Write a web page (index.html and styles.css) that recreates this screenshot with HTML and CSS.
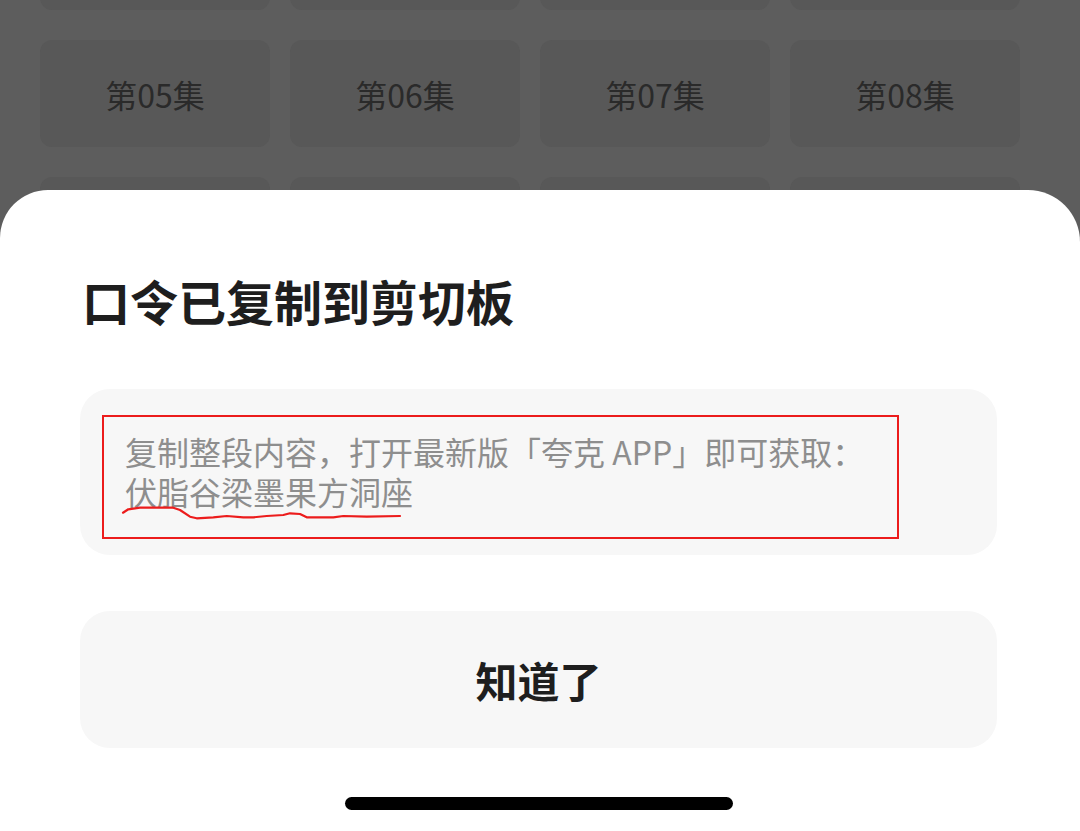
FILE: index.html
```html
<!DOCTYPE html>
<html lang="zh-CN">
<head>
    <meta charset="UTF-8">
    <meta name="viewport" content="width=device-width, initial-scale=1.0">
    <title>口令已复制到剪切板</title>
    <link rel="stylesheet" href="styles.css">
</head>
<body>

    <!-- Episode list behind the dimmed overlay (first row scrolled out of view) -->
    <div class="episode-grid">
        <div class="episode"></div>
        <div class="episode"></div>
        <div class="episode"></div>
        <div class="episode"></div>
        <div class="episode">第05集</div>
        <div class="episode">第06集</div>
        <div class="episode">第07集</div>
        <div class="episode">第08集</div>
        <div class="episode"></div>
        <div class="episode"></div>
        <div class="episode"></div>
        <div class="episode"></div>
    </div>

    <!-- Bottom sheet -->
    <div class="sheet">
        <h1 class="sheet-title">口令已复制到剪切板</h1>

        <div class="code-card">
            <div class="code-mark">
                <p class="code-text">复制整段内容，打开最新版「夸克 APP」即可获取：<br>伏脂谷梁墨果方洞座</p>
                <!-- hand-drawn underline -->
                <svg class="squiggle" width="320" height="120" viewBox="0 0 320 120">
                    <path d="M21 97.7 L26.3 94.3 L38 92.7 L71.3 92.7 L78 95 L88 101.7 L94.7 103.3 L111.3 102.3 L124.7 101 L141.3 102.3 L151.3 102.3 L164.7 101 L181.3 100 L188 98.3 L198 99 L204.7 102.3 L231.3 102.3 L241.3 101 L264.7 101.7 L298 101"
                          fill="none" stroke="#ec1c1c" stroke-width="2.2" stroke-linecap="round" stroke-linejoin="round"/>
                </svg>
            </div>
        </div>

        <button class="ok-btn">知道了</button>

        <div class="home-bar"></div>
    </div>

</body>
</html>
```

FILE: styles.css
```css
/* Reset */
* {
    box-sizing: border-box;
    margin: 0;
    padding: 0;
}

html, body {
    width: 1080px;
    height: 831px;
    overflow: hidden;
}

body {
    position: relative;
    background-color: #5d5d5d; /* dimmed page */
    font-family: "Noto Sans CJK SC", "Noto Sans", sans-serif;
}

/* Episode grid (behind the overlay) */
.episode-grid {
    display: grid;
    grid-template-columns: repeat(4, 230px);
    grid-auto-rows: 107px;
    column-gap: 20px;
    row-gap: 30px;
    padding: 0 40px;
    margin-top: -97px;
}

.episode {
    display: flex;
    justify-content: center;
    align-items: center;
    background-color: #585858;
    border-radius: 12px;
    color: #2a2a2a;
    font-size: 32px;
}

/* Bottom sheet */
.sheet {
    position: absolute;
    top: 190px;
    left: 0;
    right: 0;
    bottom: 0;
    display: flex;
    flex-direction: column;
    padding: 80px 83px 0 80px;
    background-color: #fff;
    border-radius: 48px 52px 0 0;
}

.sheet-title {
    padding-left: 2px;
    font-size: 48px;
    line-height: 60px;
    font-weight: 600;
    color: #1e1e1e;
}

/* Copied code card */
.code-card {
    margin-top: 59px;
    height: 166px;
    padding: 26px 0 0 22px;
    background-color: #f7f7f7;
    border-radius: 30px;
}

.code-mark {
    position: relative;
    width: 797px;
    height: 124px;
    padding: 14px 0 0 21px;
    border: 2px solid #ec1c1c;
}

.code-text {
    font-size: 32px;
    line-height: 40px;
    color: #8e8e8e;
}

.squiggle {
    position: absolute;
    top: -2px;
    left: -2px;
}

/* Confirm button */
.ok-btn {
    margin-top: 56px;
    height: 137px;
    border: none;
    border-radius: 30px;
    background-color: #f7f7f7;
    font-family: inherit;
    font-size: 42px;
    font-weight: 600;
    color: #1e1e1e;
}

/* iOS home indicator */
.home-bar {
    align-self: center;
    width: 388px;
    height: 13px;
    margin-top: 49px;
    background-color: #000;
    border-radius: 7px;
}
```
